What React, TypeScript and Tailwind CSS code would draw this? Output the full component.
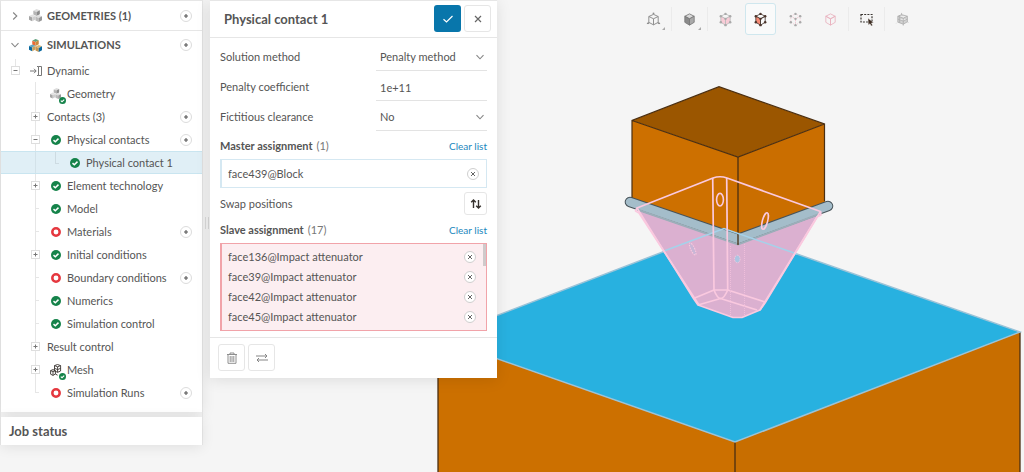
import type { ReactNode } from 'react';

type Status = 'ok' | 'open' | 'geometry' | 'mesh';

interface TreeNode {
  label: string;
  toggle?: '+' | '-';
  status?: Status;
  add?: boolean;
}

const beforeSelected: TreeNode[] = [
  { label: 'Geometry', status: 'geometry' },
  { label: 'Contacts (3)', toggle: '+', add: true },
  { label: 'Physical contacts', toggle: '-', status: 'ok', add: true },
];

const afterSelected: TreeNode[] = [
  { label: 'Element technology', toggle: '+', status: 'ok' },
  { label: 'Model', status: 'ok' },
  { label: 'Materials', status: 'open', add: true },
  { label: 'Initial conditions', toggle: '+', status: 'ok' },
  { label: 'Boundary conditions', status: 'open', add: true },
  { label: 'Numerics', status: 'ok' },
  { label: 'Simulation control', status: 'ok' },
  { label: 'Result control', toggle: '+' },
  { label: 'Mesh', toggle: '+', status: 'mesh' },
  { label: 'Simulation Runs', status: 'open', add: true },
];

const slaveFaces = [
  'face136@Impact attenuator',
  'face39@Impact attenuator',
  'face42@Impact attenuator',
  'face45@Impact attenuator',
];

function Chevron({ open = false }: { open?: boolean }) {
  return (
    <svg width="10" height="10" viewBox="0 0 10 10" fill="none" stroke="#858585" strokeWidth="1.1" aria-hidden="true">
      <path d={open ? 'M1.5 3.2 5 6.8 8.5 3.2' : 'M3.2 1.5 6.8 5 3.2 8.5'} />
    </svg>
  );
}

function CheckDot({ size = 10 }: { size?: number }) {
  return (
    <svg width={size} height={size} viewBox="0 0 10 10" aria-hidden="true">
      <circle cx="5" cy="5" r="5" fill="#15834a" />
      <path d="M2.5 5.1 4.3 6.7 7.5 3.6" fill="none" stroke="#fff" strokeWidth="1.5" />
    </svg>
  );
}

function OpenDot() {
  return (
    <svg width="10" height="10" viewBox="0 0 10 10" aria-hidden="true">
      <circle cx="5" cy="5" r="3.7" fill="#fff" stroke="#e5383f" strokeWidth="2.5" />
    </svg>
  );
}

function Cube({ x, y, top, left, right }: { x: number; y: number; top: string; left: string; right: string }) {
  return (
    <g transform={`translate(${x} ${y})`}>
      <path d="M0 1.5 3 0 6 1.2 3 2.8Z" fill={top} />
      <path d="M0 1.5 3 2.8V6.4L0 5Z" fill={left} />
      <path d="M6 1.2 3 2.8V6.4L6 4.8Z" fill={right} />
    </g>
  );
}

function GreyCubes({ size = 12 }: { size?: number }) {
  return (
    <svg width={size} height={size} viewBox="0 0 12 12" aria-hidden="true">
      <Cube x={4} y={0} top="#dedede" left="#b5b5b5" right="#8b8b8b" />
      <Cube x={0} y={5} top="#e2e2e2" left="#a5a5a5" right="#cecece" />
      <Cube x={6} y={5.5} top="#dedede" left="#bbb" right="#989898" />
    </svg>
  );
}

function ColorCubes() {
  return (
    <svg width="13" height="13" viewBox="0 0 12 12" aria-hidden="true">
      <Cube x={3} y={0} top="#5fa17c" left="#e96a35" right="#c8893d" />
      <Cube x={0} y={5} top="#64a8bd" left="#08689f" right="#c7a05f" />
      <Cube x={6} y={5.5} top="#dcb675" left="#c49653" right="#08689f" />
    </svg>
  );
}

function MeshCubes() {
  return (
    <svg width="12" height="12" viewBox="0 0 12 12" fill="none" stroke="#3b3632" strokeWidth=".9" aria-hidden="true">
      <path d="M4.5 1.6 7.5.5 10.6 1.6V7L7.6 8.3 4.5 7ZM4.5 1.6 7.6 2.8 10.6 1.6M7.6 2.8V8.3M4.5 4.3 7.6 5.6 10.6 4.3" />
      <path d="M.6 6.6 3 5.6 5.4 6.6V10L3 11.4.6 10.2ZM.6 6.6 3 7.6 5.4 6.6M3 7.6v3.8M5.4 10l2.2 1.2" />
    </svg>
  );
}

function StatusIcon({ status }: { status: Status }) {
  if (status === 'ok') return <CheckDot />;
  if (status === 'open') return <OpenDot />;
  return (
    <span className="relative block size-3">
      {status === 'geometry' ? <GreyCubes size={11} /> : <MeshCubes />}
      <span className="absolute -right-1 -bottom-1 rounded-full">
        <CheckDot size={7} />
      </span>
    </span>
  );
}

function AddButton({ label }: { label: string }) {
  return (
    <button
      type="button"
      aria-label={`Add to ${label}`}
      className="ml-auto flex size-3 shrink-0 items-center justify-center rounded-full border border-[#dcdcdc] bg-white"
    >
      <svg width="6" height="6" viewBox="0 0 6 6" stroke="#555" strokeWidth="1.1" aria-hidden="true">
        <path d="M3 1v4M1 3h4" />
      </svg>
    </button>
  );
}

function ToggleBox({ sign, label }: { sign: '+' | '-'; label: string }) {
  return (
    <button
      type="button"
      aria-label={`${sign === '+' ? 'Expand' : 'Collapse'} ${label}`}
      className="relative flex size-[9px] shrink-0 items-center justify-center border border-[#dedede] bg-white"
    >
      <svg width="5" height="5" viewBox="0 0 5 5" stroke="#777" strokeWidth="1" aria-hidden="true">
        <path d={sign === '+' ? 'M2.5 .5v4M.5 2.5h4' : 'M.5 2.5h4'} />
      </svg>
    </button>
  );
}

function TreeRow({ node, last = false }: { node: TreeNode; last?: boolean }) {
  return (
    <li className="flex h-[23px] items-center pr-[10px] pl-[30px]">
      <span className="relative flex h-full w-[9px] items-center">
        <span className={`absolute top-0 left-1 border-l border-[#e6e6e6] ${last ? 'h-3' : 'h-full'}`} />
        {node.toggle ? (
          <ToggleBox sign={node.toggle} label={node.label} />
        ) : (
          <span className="ml-1 w-1 border-t border-[#e6e6e6]" />
        )}
      </span>
      {node.status && (
        <span className="ml-[9px] flex w-[14px] justify-center">
          <StatusIcon status={node.status} />
        </span>
      )}
      <span className={node.status ? 'ml-1' : 'ml-[7px]'}>{node.label}</span>
      {node.add && <AddButton label={node.label} />}
    </li>
  );
}

function Sidebar() {
  return (
    <nav className="w-[203px] shrink-0 border-x border-[#e9e9e9]">
      <div className="bg-white pb-2 shadow-[0_2px_14px_rgba(0,0,0,0.09)]">
        <div className="flex h-[31px] items-center border-y border-[#e6e6e6] pr-[10px] pl-[9px]">
          <Chevron />
          <span className="mr-[5px] ml-[9px]"><GreyCubes size={13} /></span>
          <span className="font-bold">GEOMETRIES (1)</span>
          <AddButton label="Geometries" />
        </div>
        <div className="flex h-7 items-center pr-[10px] pl-[9px]">
          <Chevron open />
          <span className="mr-[5px] ml-[9px]"><ColorCubes /></span>
          <span className="font-bold">SIMULATIONS</span>
          <AddButton label="Simulations" />
        </div>
        <div className="flex h-[23px] items-center pl-[10px]">
          <span className="relative flex h-full items-center">
            <span className="absolute top-0 left-1 h-2 border-l border-[#e6e6e6]" />
            <ToggleBox sign="-" label="Dynamic" />
          </span>
          <svg className="mr-1 ml-[10px]" width="13" height="12" viewBox="0 0 13 12" fill="none" stroke="#777" aria-hidden="true">
            <path d="M0 6h6M4 3.8 6.2 6 4 8.2M7 1.5h1.5v9H7M8.5 1.5h3v9h-3" />
          </svg>
          <span>Dynamic</span>
        </div>
        <ul>
          {beforeSelected.map((n) => <TreeRow key={n.label} node={n} />)}
          <li className="flex h-[23px] items-center border-y border-[#c9e5f0] bg-[#e0eff6] pl-[34px]">
            <span className="h-full w-5 border-l border-[#d3e2e9]" />
            <span className="flex h-full w-[5px] items-start">
              <span className="h-3 w-1 border-b border-l border-[#cddbe2]" />
            </span>
            <span className="ml-[10px]"><CheckDot /></span>
            <span className="ml-[6px]">Physical contact 1</span>
          </li>
          {afterSelected.map((n, i) => (
            <TreeRow key={n.label} node={n} last={i === afterSelected.length - 1} />
          ))}
        </ul>
      </div>
      <h2 className="mt-[5px] flex h-7 items-center bg-white pb-px pl-2 text-[13px] font-bold shadow-[0_2px_14px_rgba(0,0,0,0.09)]">
        Job status
      </h2>
    </nav>
  );
}

function RemoveButton({ label }: { label: string }) {
  return (
    <button
      type="button"
      aria-label={`Remove ${label}`}
      className="ml-auto flex size-3 items-center justify-center rounded-full border border-[#cfcfcf] bg-white"
    >
      <svg width="6" height="6" viewBox="0 0 6 6" stroke="#666" strokeWidth="1" aria-hidden="true">
        <path d="M1 1l4 4M5 1 1 5" />
      </svg>
    </button>
  );
}

function Field({ id, label, children }: { id: string; label: string; children: ReactNode }) {
  return (
    <div className="flex h-[30px] items-center">
      <label htmlFor={id} className="w-[156px] pt-[2px]">{label}</label>
      <div className="relative h-full flex-1 border-b border-[#e3e3e3]">{children}</div>
    </div>
  );
}

function SelectField({ id, label, options }: { id: string; label: string; options: string[] }) {
  return (
    <Field id={id} label={label}>
      <select id={id} className="h-full w-full appearance-none bg-transparent pt-[2px] pl-1 outline-none">
        {options.map((o) => <option key={o}>{o}</option>)}
      </select>
      <span className="pointer-events-none absolute top-[11px] right-[2px]"><Chevron open /></span>
    </Field>
  );
}

function AssignmentTitle({ title, count }: { title: string; count: number }) {
  return (
    <div className="flex h-[18px] items-center">
      <h3 className="font-bold">{title}</h3>
      <span className="ml-1 text-[#777]">({count})</span>
      <a href="#clear" className="ml-auto text-[10px] text-[#1b87bd]">Clear list</a>
    </div>
  );
}

function ContactPanel() {
  return (
    <section className="w-[287px] shrink-0 border-t border-[#e6e6e6] bg-white shadow-[0_2px_14px_rgba(0,0,0,0.1)]">
      <header className="flex h-[37px] items-center border-b border-[#e6e6e6] pr-[6px] pb-px pl-[14px]">
        <h1 className="text-[13px] font-bold">Physical contact 1</h1>
        <button type="button" aria-label="Apply" className="ml-auto flex size-[27px] items-center justify-center rounded-[3px] bg-[#0876ab]">
          <svg width="12" height="12" viewBox="0 0 12 12" fill="none" stroke="#fff" strokeWidth="1.2" aria-hidden="true">
            <path d="M1.5 6.3 4.5 9 10.5 3" />
          </svg>
        </button>
        <button type="button" aria-label="Close" className="ml-[3px] flex size-[27px] items-center justify-center rounded-[3px] border border-[#e6e6e6]">
          <svg width="8" height="8" viewBox="0 0 8 8" stroke="#666" strokeWidth="1.2" aria-hidden="true">
            <path d="M1 1l6 6M7 1 1 7" />
          </svg>
        </button>
      </header>
      <div className="px-[10px] pt-[3px] pb-[6px]">
        <SelectField id="method" label="Solution method" options={['Penalty method', 'Lagrange multiplier']} />
        <Field id="coefficient" label="Penalty coefficient">
          <input id="coefficient" type="text" defaultValue="1e+11" className="h-full w-full bg-transparent pt-[3px] pl-1 outline-none" />
        </Field>
        <SelectField id="clearance" label="Fictitious clearance" options={['No', 'Yes']} />
        <div className="mt-[6px]">
          <AssignmentTitle title="Master assignment" count={1} />
          <div className="mt-1 flex h-[29px] items-center border border-l-2 border-[#d5e8f2] pr-[7px] pl-[6px]">
            <span>face439@Block</span>
            <RemoveButton label="face439@Block" />
          </div>
        </div>
        <div className="mt-1 flex items-center justify-between">
          <span>Swap positions</span>
          <button type="button" aria-label="Swap positions" className="flex size-[23px] items-center justify-center rounded-[3px] border border-[#e6e6e6]">
            <svg width="12" height="10" viewBox="0 0 12 10" fill="none" stroke="#37322e" strokeWidth="1.4" aria-hidden="true">
              <path d="M3.5 9V1M1.2 3.3 3.5 1 5.8 3.3M8.5 1v8M6.2 6.7 8.5 9l2.3-2.3" />
            </svg>
          </button>
        </div>
        <div className="mt-[6px]">
          <AssignmentTitle title="Slave assignment" count={17} />
          <div className="relative mt-1 border border-l-2 border-[#f1a3a9] bg-[#fceef1] py-[3px] pr-[10px] pl-[6px]">
            <ul>
              {slaveFaces.map((f) => (
                <li key={f} className="flex h-5 items-center">
                  <span>{f}</span>
                  <RemoveButton label={f} />
                </li>
              ))}
            </ul>
            <span className="absolute top-0 right-0 h-[22px] w-[3px] bg-[#cfcacb]" />
          </div>
        </div>
      </div>
      <footer className="flex gap-[3px] border-t border-[#e6e6e6] px-2 pt-[6px] pb-[7px]">
        <button type="button" aria-label="Delete" className="flex size-[27px] items-center justify-center rounded-[3px] border border-[#e6e6e6]">
          <svg width="10" height="12" viewBox="0 0 10 12" fill="none" stroke="#858585" strokeWidth=".9" aria-hidden="true">
            <path d="M0 2.5h10M3 2.5V1h4v1.5M1 2.5v8.8h8V2.5M3.2 4v6M5 4v6M6.8 4v6" />
          </svg>
        </button>
        <button type="button" aria-label="Swap" className="flex size-[27px] items-center justify-center rounded-[3px] border border-[#e6e6e6]">
          <svg width="12" height="8" viewBox="0 0 12 8" fill="none" stroke="#858585" strokeWidth="1" aria-hidden="true">
            <path d="M0 2h11M9 0l2 2-2 2M12 6H1M3 4 1 6l2 2" />
          </svg>
        </button>
      </footer>
    </section>
  );
}

const corners: [number, number][] = [[8, 2], [13, 4.5], [13, 11], [8, 14], [3, 11], [3, 4.5], [8, 7.3]];

interface CubeToolProps {
  stroke: string;
  top?: string;
  left?: string;
  right?: string;
  dots?: string;
  dashed?: boolean;
}

function CubeTool({ stroke, top = 'none', left = 'none', right = 'none', dots, dashed }: CubeToolProps) {
  return (
    <svg width="15" height="15" viewBox="0 0 16 16" stroke={stroke} strokeWidth=".9" strokeDasharray={dashed ? '1 1.4' : undefined} aria-hidden="true">
      <path d="M3 4.5 8 2 13 4.5 8 7.3Z" fill={top} />
      <path d="M3 4.5 8 7.3V14L3 11Z" fill={left} />
      <path d="M13 4.5 8 7.3V14l5-3Z" fill={right} />
      {dots && corners.map(([x, y]) => <circle key={`${x}-${y}`} cx={x} cy={y} r="1.3" fill={dots} stroke="none" />)}
    </svg>
  );
}

function Tool({ label, active, menu, children }: { label: string; active?: boolean; menu?: boolean; children: ReactNode }) {
  return (
    <button
      type="button"
      aria-label={label}
      className={`relative mx-[2px] flex h-8 w-[31px] items-center justify-center rounded-[3px] border ${active ? 'border-[#cfe7ee] bg-[#f9fafa]' : 'border-transparent'}`}
    >
      {children}
      {menu && (
        <svg className="absolute right-[3px] bottom-1" width="3" height="3" viewBox="0 0 3 3" aria-hidden="true">
          <path d="M3 0v3H0Z" fill="#aaa" />
        </svg>
      )}
    </button>
  );
}

function Divider() {
  return <span className="h-6 w-px bg-[#ebebeb]" />;
}

function Toolbar() {
  return (
    <div className="flex flex-1 items-center self-start pt-[3px] pl-[139px]">
      <Tool label="Wireframe view" menu>
        <svg width="15" height="15" viewBox="0 0 16 16" fill="none" stroke="#8a8a8a" strokeWidth="1" aria-hidden="true">
          <path d="M3 4.8 8 2.5 13 4.8V11L8 13.7 3 11ZM3 4.8 8 7.2 13 4.8M8 7.2V13.7" />
          <path d="M8 2.5V.8M7 1.4h2M3 11 1 12.3h2.400M13 11l2 1.300h-2.400" />
        </svg>
      </Tool>
      <Divider />
      <Tool label="Shaded view" menu><CubeTool stroke="#777" top="#d9d9d9" left="#8b8b8b" right="#aaa" /></Tool>
      <Divider />
      <Tool label="Select volumes"><CubeTool stroke="#bbb" left="#f9ccd7" right="#f9ccd7" dots="#aaa" /></Tool>
      <Tool label="Select faces" active><CubeTool stroke="#4a3c35" left="#f78b76" dots="#4a342b" /></Tool>
      <Tool label="Select nodes"><CubeTool stroke="#edbcc8" dots="#aaa" dashed /></Tool>
      <Tool label="Select edges"><CubeTool stroke="#e9b1be" /></Tool>
      <Divider />
      <Tool label="Box selection">
        <svg width="16" height="16" viewBox="0 0 16 16" aria-hidden="true">
          <path d="M2 3.5h11v7.5H2Z" fill="none" stroke="#3b3632" strokeWidth="1.2" strokeDasharray="2 1.2" />
          <path d="M9 7.3 14.6 11.5 12.4 12 13.6 14.3 12.2 15 11 12.7 9.3 14Z" fill="#3b2b20" stroke="#f5f5f5" strokeWidth=".4" />
        </svg>
      </Tool>
      <Divider />
      <Tool label="Invert selection">
        <svg width="15" height="15" viewBox="0 0 16 16" fill="#d2d2d2" stroke="#aaa" strokeWidth=".8" aria-hidden="true">
          <path d="M3 4.5 7 2.8 13.2 4.5V10.5L8.8 13 3 10.8ZM3 4.5 8.8 6.5 13.2 4.5M8.8 6.5V13M5 3.5v8M3 7.6l5.8 2 4.4-2" />
          <path d="M7 1v2M2 11.5l-.5.5M8.8 13v1.500M13.2 10.5l1 .6" />
        </svg>
      </Tool>
    </div>
  );
}

function Scene() {
  return (
    <svg className="absolute inset-0 h-full w-full" viewBox="0 0 1024 472" preserveAspectRatio="xMidYMid slice" role="img" aria-label="Impact attenuator between two blocks">
      {/* Base block */}
      <path d="M438 338 735 442V482H438Z" fill="#cc7000" />
      <path d="M1020 332 735 442V482H1020Z" fill="#c86e00" />
      <path d="M438 338V480M735 442v40M1020 332V480" stroke="#4b2f12" strokeWidth="1.3" />
      <path d="M724 228.5 1020 332 735 442 438 338Z" fill="#28b1e0" stroke="#9bc3d8" strokeWidth="1.5" />
      {/* Attenuator faces */}
      <path d="M637 208 738 244 820 211 765 303 760 310 742 317.5H733L698 305 693.5 298.5Z" fill="#dbb0d0" />
      {/* Upper block */}
      <path d="M632 120.5 738 157V237L632 202Z" fill="#cd7000" />
      <path d="M824.5 124 738 157V237L825 203Z" fill="#ca6e00" />
      <path d="M632 120.5 719 86.7 824.5 124 738 157Z" fill="#9b5600" />
      <path d="M632 198V120.5L719 86.7 824.5 124V201M632 120.5 738 157 824.5 124" fill="none" stroke="#4b2f12" strokeWidth="1.2" />
      {/* Mounting plate */}
      <path d="M630 202 738 239 828 206" fill="none" stroke="#48545a" strokeWidth="10.5" strokeLinecap="round" strokeLinejoin="bevel" />
      <path d="M630 202 738 239 828 206" fill="none" stroke="#a4bdca" strokeWidth="8.5" strokeLinecap="round" strokeLinejoin="bevel" />
      <path d="M637 209.5 738 244.5 821 213.5" fill="none" stroke="#9baeb9" strokeWidth="2" />
      <path d="M738 157v88" stroke="#4b2f12" strokeWidth="1.3" />
      {/* Base edge seen through the attenuator */}
      <path d="M664 251 724 228.5 797 254" fill="none" stroke="#a5d2ea" strokeWidth="1.6" />
      {/* Attenuator edges */}
      <g fill="none" stroke="#fac9df" strokeWidth="1.7" strokeLinejoin="round">
        <path d="M637 208 713 178Q720 175.5 727 178L820.5 211.5 765 303 760 310 742 317.5H733L698 305 693.5 298.5Z" />
        <path d="M637 208 635.5 211 639 213 699 305M820.5 211.5 821 215 817 217 760 310" />
        <path d="M712.7 178 714 290Q720.5 307 727.7 290L726.7 178" />
        <path d="M693.5 298.5 714 290H727.7L765 302M698 305 720.5 298.5 757 310" />
      </g>
      <path d="M730.5 246V316M744.5 244V315" stroke="#efbedb" strokeWidth="1" strokeDasharray="1 1" />
      <g stroke="#fac9df" strokeWidth="1.6">
        <ellipse cx="720" cy="199.7" rx="3.4" ry="6.3" fill="none" />
        <ellipse cx="765" cy="221" rx="2.6" ry="8.5" fill="none" transform="rotate(15 765 221)" />
        <ellipse cx="692.7" cy="249" rx="2" ry="6.5" fill="#c9b6d6" strokeWidth="1.1" strokeDasharray="1.5 1" transform="rotate(-25 692.7 249)" />
        <ellipse cx="737.3" cy="259" rx="2.8" ry="3.8" fill="#adc4e1" strokeWidth="1" strokeDasharray="1.5 1" />
      </g>
    </svg>
  );
}

export default function App() {
  return (
    <main className="relative min-h-screen overflow-hidden bg-[#f5f5f5] font-['Lato',sans-serif] text-[11px] leading-4 text-[#555]">
      <Scene />
      <div className="relative flex min-h-screen items-start">
        <Sidebar />
        <div className="flex w-[7px] justify-center self-stretch">
          <span className="mt-[217px] h-3 w-1 border-x border-[#d6d6d6]" />
        </div>
        <ContactPanel />
        <Toolbar />
      </div>
    </main>
  );
}
